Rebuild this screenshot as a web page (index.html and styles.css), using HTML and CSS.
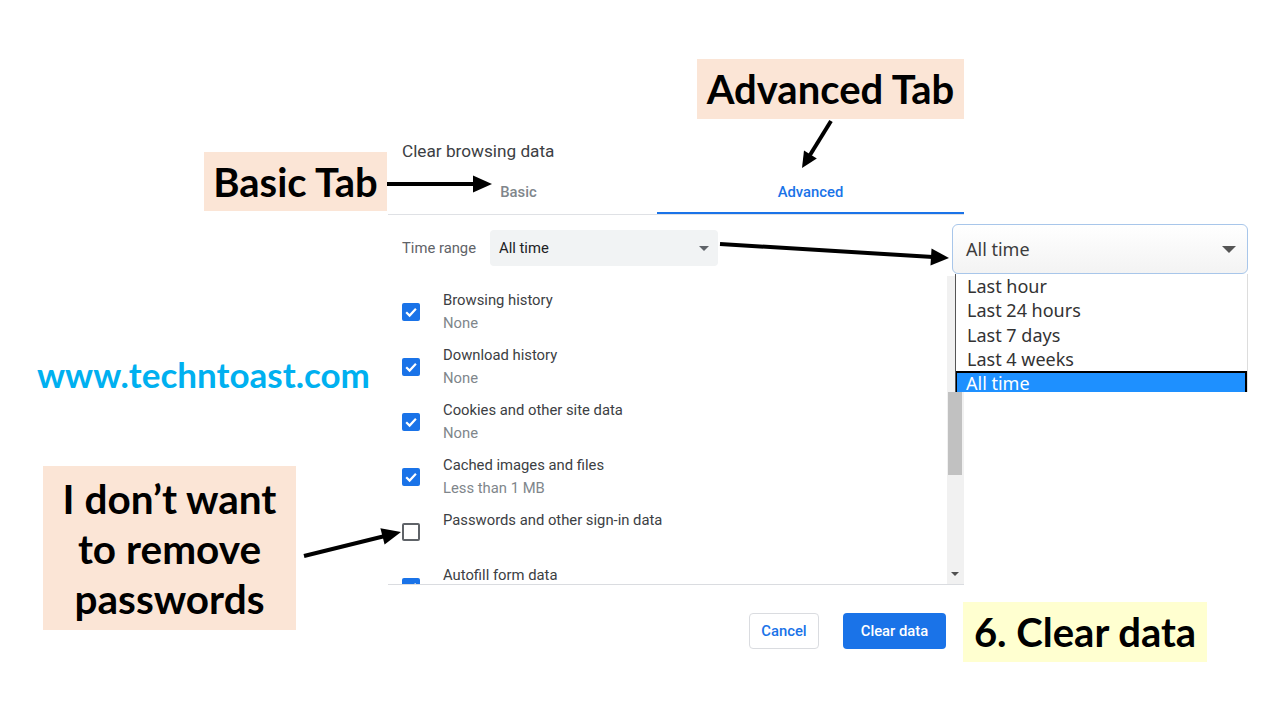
FILE: index.html
```html
<!DOCTYPE html>
<html lang="en">
<head>
<meta charset="utf-8">
<title>Clear browsing data</title>
<link rel="stylesheet" href="styles.css">
</head>
<body>
<div class="slide">

  <div class="dialog">
    <div class="dlg-title">Clear browsing data</div>
    <div class="tabs">
      <div class="tab tab-basic">Basic</div>
      <div class="tab active">Advanced</div>
    </div>
    <div class="range-row">
      <span class="range-label">Time range</span>
      <div class="select">
        <span>All time</span>
        <span class="tri"></span>
      </div>
    </div>
    <div class="scroll-area">
      <div class="items">
        <div class="item">
          <span class="cb checked"><svg viewBox="0 0 18 18" width="18" height="18"><path d="M4.2 9.3 L7.6 12.6 L13.9 5.8" fill="none" stroke="#fff" stroke-width="2.2"/></svg></span>
          <div class="item-text"><div class="item-label">Browsing history</div><div class="item-sub">None</div></div>
        </div>
        <div class="item">
          <span class="cb checked"><svg viewBox="0 0 18 18" width="18" height="18"><path d="M4.2 9.3 L7.6 12.6 L13.9 5.8" fill="none" stroke="#fff" stroke-width="2.2"/></svg></span>
          <div class="item-text"><div class="item-label">Download history</div><div class="item-sub">None</div></div>
        </div>
        <div class="item">
          <span class="cb checked"><svg viewBox="0 0 18 18" width="18" height="18"><path d="M4.2 9.3 L7.6 12.6 L13.9 5.8" fill="none" stroke="#fff" stroke-width="2.2"/></svg></span>
          <div class="item-text"><div class="item-label">Cookies and other site data</div><div class="item-sub">None</div></div>
        </div>
        <div class="item">
          <span class="cb checked"><svg viewBox="0 0 18 18" width="18" height="18"><path d="M4.2 9.3 L7.6 12.6 L13.9 5.8" fill="none" stroke="#fff" stroke-width="2.2"/></svg></span>
          <div class="item-text"><div class="item-label">Cached images and files</div><div class="item-sub">Less than 1 MB</div></div>
        </div>
        <div class="item">
          <span class="cb"></span>
          <div class="item-text"><div class="item-label">Passwords and other sign-in data</div><div class="item-sub">&nbsp;</div></div>
        </div>
        <div class="item">
          <span class="cb checked"><svg viewBox="0 0 18 18" width="18" height="18"><path d="M4.2 9.3 L7.6 12.6 L13.9 5.8" fill="none" stroke="#fff" stroke-width="2.2"/></svg></span>
          <div class="item-text"><div class="item-label">Autofill form data</div><div class="item-sub">&nbsp;</div></div>
        </div>
      </div>
      <div class="scrollbar">
        <div class="sb-track"><div class="sb-thumb"></div></div>
        <span class="sb-down"></span>
      </div>
    </div>
    <div class="footer">
      <button class="btn btn-cancel">Cancel</button>
      <button class="btn btn-primary">Clear data</button>
    </div>
  </div>

  <div class="dropdown">
    <div class="dd-select">
      <span>All time</span>
      <span class="dd-tri"></span>
    </div>
    <ul class="dd-list">
      <li>Last hour</li>
      <li>Last 24 hours</li>
      <li>Last 7 days</li>
      <li>Last 4 weeks</li>
      <li class="sel">All time</li>
    </ul>
  </div>

  <div class="callout callout-adv">Advanced Tab</div>
  <div class="callout callout-basic">Basic Tab</div>
  <div class="site">www.techntoast.com</div>
  <div class="callout callout-pw">I don’t want<br>to remove<br>passwords</div>
  <div class="callout callout-clear">6. Clear data</div>

  <svg class="arrows" width="1280" height="720" viewBox="0 0 1280 720">
    <g stroke="#000" stroke-width="4" fill="none">
      <line x1="387" y1="184" x2="476" y2="184"/>
      <line x1="831" y1="121" x2="810" y2="155"/>
      <line x1="720" y1="244" x2="933" y2="257"/>
      <line x1="304" y1="556" x2="385" y2="536"/>
    </g>
    <g fill="#000">
      <polygon points="492,184 473,175.5 473,192.5"/>
      <polygon points="802,168 816.8,158.5 804,150.6"/>
      <polygon points="949,258 930.5,265.5 931.5,248.5"/>
      <polygon points="401,532 384.6,544.6 380.4,528.2"/>
    </g>
  </svg>
</div>
</body>
</html>
```

FILE: styles.css
```css
* { box-sizing: border-box; }
html, body { margin: 0; padding: 0; background: #fff; }
body { width: 1280px; height: 720px; overflow: hidden; }

.slide {
  position: relative;
  width: 1280px;
  height: 720px;
  background: #fff;
  font-family: Roboto, "Liberation Sans", sans-serif;
}

/* ---------- Chrome dialog screenshot ---------- */
.dialog {
  position: absolute;
  left: 388px;
  top: 130px;
  width: 576px;
  height: 530px;
  display: flex;
  flex-direction: column;
  background: #fff;
  color: #202124;
}
.dlg-title {
  height: 40px;
  padding: 10px 0 0 14px;
  font-size: 17.2px;
  line-height: 22px;
  color: #3c4043;
}
.tabs {
  display: flex;
  height: 45px;
  border-bottom: 1px solid #dfe1e5;
}
.tab {
  display: flex;
  align-items: center;
  justify-content: center;
  font-size: 14.8px;
  font-weight: 500;
  color: #80868b;
  border-bottom: 2px solid transparent;
  padding-top: 1px;
}
.tab-basic {
  width: 269px;
  flex: none;
  padding-right: 8px;
}
.tab.active {
  flex: 1;
  color: #1a73e8;
  border-bottom-color: #1a73e8;
}

.range-row {
  display: flex;
  align-items: center;
  margin-top: 15px;
  height: 36px;
}
.range-label {
  width: 102px;
  padding-left: 14px;
  font-size: 14.8px;
  color: #5f6368;
}
.select {
  width: 228px;
  height: 36px;
  background: #f1f3f4;
  border-radius: 4px;
  display: flex;
  align-items: center;
  justify-content: space-between;
  padding: 0 9px 0 9px;
  font-size: 14.8px;
  color: #202124;
}
.tri {
  width: 0; height: 0;
  border-left: 5.5px solid transparent;
  border-right: 5.5px solid transparent;
  border-top: 5.5px solid #5f6368;
}

.scroll-area {
  display: flex;
  margin-top: 10px;
  height: 309px;
  border-bottom: 1px solid #dadce0;
  overflow: hidden;
}
.items {
  flex: 1;
  padding-top: 8px;
}
.item {
  display: flex;
  align-items: center;
  height: 55px;
  padding-left: 14px;
}
.cb {
  width: 18px;
  height: 18px;
  border-radius: 2px;
  border: 2px solid #5f6368;
  flex: none;
  margin-right: 23px;
}
.cb.checked {
  background: #1a73e8;
  border: none;
}
.cb svg { display: block; }
.item-text { font-size: 14.8px; line-height: 23px; }
.item-label { color: #3c4043; }
.item-sub { color: #80868b; }

.scrollbar {
  width: 17px;
  padding-right: 1px;
  display: flex;
  flex-direction: column;
  background: #f1f1f1;
}
.sb-track {
  flex: 1;
  padding-top: 116px;
}
.sb-thumb {
  margin: 0 1px;
  height: 83px;
  background: #c1c1c1;
}
.sb-down {
  align-self: center;
  margin-bottom: 8px;
  width: 0; height: 0;
  border-left: 4px solid transparent;
  border-right: 4px solid transparent;
  border-top: 4px solid #505050;
}

.footer {
  display: flex;
  justify-content: flex-end;
  gap: 24px;
  padding: 28px 18px 0 0;
}
.btn {
  height: 36px;
  border-radius: 4px;
  font-family: Roboto, "Liberation Sans", sans-serif;
  font-size: 14.8px;
  font-weight: 500;
  cursor: pointer;
  padding: 0;
}
.btn-cancel {
  width: 70px;
  background: #fff;
  color: #1a73e8;
  border: 1px solid #dadce0;
}
.btn-primary {
  width: 103px;
  background: #1a73e8;
  color: #fff;
  border: none;
}

/* ---------- Pasted dropdown screenshot ---------- */
.dropdown {
  position: absolute;
  left: 952px;
  top: 224px;
  width: 296px;
  font-family: "Noto Sans", "Open Sans", sans-serif;
  font-size: 18px;
  color: #333;
}
.dd-select {
  height: 50px;
  border: 1px solid #a8c6ea;
  border-radius: 6px;
  background: linear-gradient(#ffffff, #f3f3f3);
  display: flex;
  align-items: center;
  justify-content: space-between;
  padding: 0 11px 0 13px;
  color: #3c3c3c;
}
.dd-tri {
  width: 0; height: 0;
  border-left: 7px solid transparent;
  border-right: 7px solid transparent;
  border-top: 7px solid #555;
}
.dd-list {
  list-style: none;
  margin: 0 0 0 3px;
  padding: 0;
  height: 118px;
  overflow: hidden;
  background: #fff;
  border-left: 1px solid #555;
  border-right: 1px solid #ddd;
}
.dd-list li {
  height: 24.3px;
  line-height: 24px;
  padding-left: 11px;
}
.dd-list li.sel {
  background: #1e90ff;
  color: #fff;
  border: 2px solid #000;
  border-bottom: none;
  padding-left: 9px;
  height: 22px;
  line-height: 20px;
  margin-left: -1px;
}

/* ---------- Slide callouts ---------- */
.callout {
  position: absolute;
  background: #fbe5d6;
  font-family: Lato, "Open Sans", sans-serif;
  font-weight: 700;
  color: #000;
  display: flex;
  align-items: center;
  justify-content: center;
  text-align: center;
}
.callout-adv {
  left: 697px; top: 59px; width: 267px; height: 60px;
  font-size: 40px;
}
.callout-basic {
  left: 204px; top: 152px; width: 183px; height: 59px;
  font-size: 40px;
}
.callout-pw {
  left: 43px; top: 466px; width: 253px; height: 164px;
  font-size: 40.5px;
  line-height: 50px;
  padding-top: 2px;
}
.callout-clear {
  left: 963px; top: 602px; width: 244px; height: 60px;
  background: #ffffd0;
  font-size: 40px;
}
.site {
  position: absolute;
  left: 37px;
  top: 352px;
  font-family: Lato, "Open Sans", sans-serif;
  font-weight: 700;
  font-size: 35px;
  color: #00b0f0;
  line-height: 44px;
}

.arrows {
  position: absolute;
  left: 0;
  top: 0;
  pointer-events: none;
}
```
